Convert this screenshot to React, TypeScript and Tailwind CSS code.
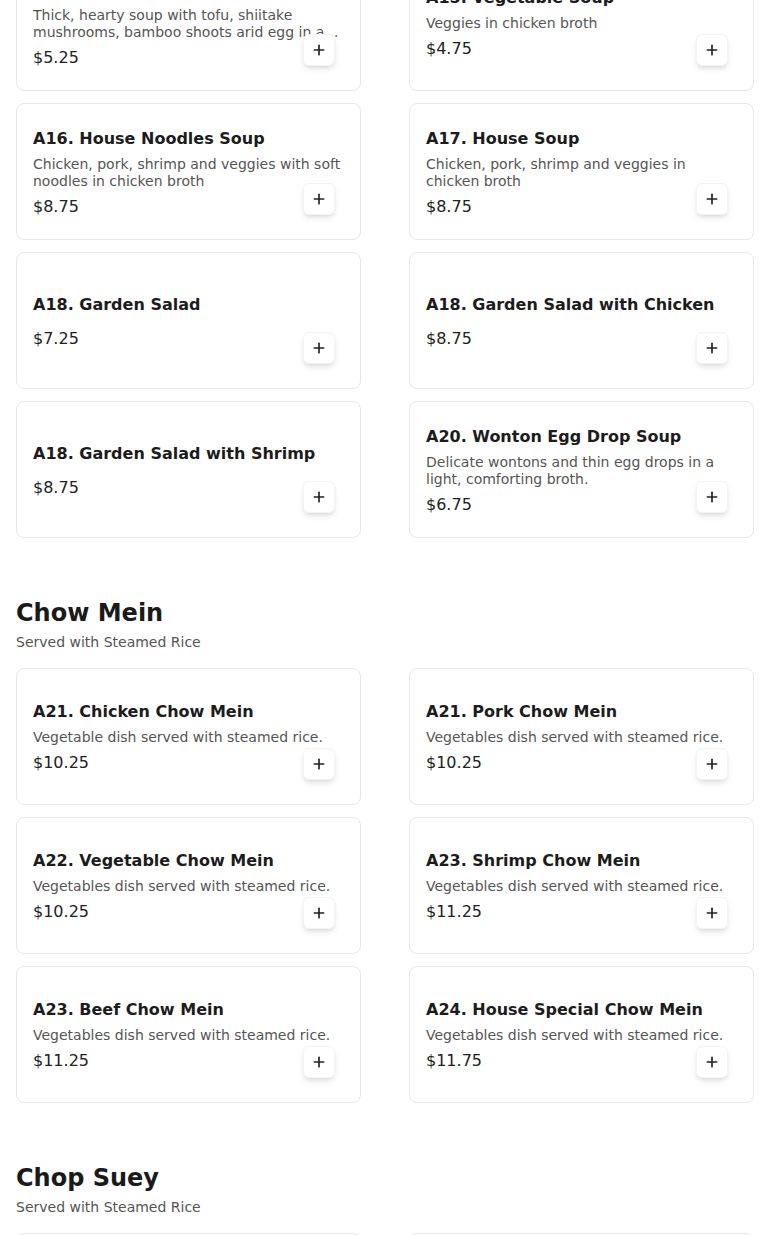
import { Plus } from "lucide-react";

type Item = { name: string; desc?: string; price: string };

// Letzte Karten der Suppen, danach die Abschnitte Chow Mein / Chop Suey.
const soups: Item[] = [
  {
    name: "A14. Hot and Sour Soup",
    desc: "Thick, hearty soup with tofu, shiitake mushrooms, bamboo shoots arid egg in a spicy and tangy broth",
    price: "$5.25",
  },
  { name: "A15. Vegetable Soup", desc: "Veggies in chicken broth", price: "$4.75" },
  {
    name: "A16. House Noodles Soup",
    desc: "Chicken, pork, shrimp and veggies with soft noodles in chicken broth",
    price: "$8.75",
  },
  {
    name: "A17. House Soup",
    desc: "Chicken, pork, shrimp and veggies in chicken broth",
    price: "$8.75",
  },
  { name: "A18. Garden Salad", price: "$7.25" },
  { name: "A18. Garden Salad with Chicken", price: "$8.75" },
  { name: "A18. Garden Salad with Shrimp", price: "$8.75" },
  {
    name: "A20. Wonton Egg Drop Soup",
    desc: "Delicate wontons and thin egg drops in a light, comforting broth.",
    price: "$6.75",
  },
];

const chowMein: Item[] = [
  { name: "A21. Chicken Chow Mein", desc: "Vegetable dish served with steamed rice.", price: "$10.25" },
  { name: "A21. Pork Chow Mein", desc: "Vegetables dish served with steamed rice.", price: "$10.25" },
  { name: "A22. Vegetable Chow Mein", desc: "Vegetables dish served with steamed rice.", price: "$10.25" },
  { name: "A23. Shrimp Chow Mein", desc: "Vegetables dish served with steamed rice.", price: "$11.25" },
  { name: "A23. Beef Chow Mein", desc: "Vegetables dish served with steamed rice.", price: "$11.25" },
  { name: "A24. House Special Chow Mein", desc: "Vegetables dish served with steamed rice.", price: "$11.75" },
];

const chopSuey: Item[] = [
  { name: "A25. Chicken Chop Suey", desc: "Vegetables dish served with steamed rice.", price: "$10.25" },
  { name: "A25. Pork Chop Suey", desc: "Vegetables dish served with steamed rice.", price: "$10.25" },
];

function MenuCard({ item }: { item: Item }) {
  return (
    <div className="relative flex h-[137px] items-center rounded-lg border border-gray-200 bg-white px-4">
      <div className="min-w-0 flex-1 pt-[2px]">
        <h3 className="text-base leading-6 font-bold text-[#1c1c1c]">{item.name}</h3>
        {item.desc && (
          <p className="mt-[5px] line-clamp-2 text-sm leading-[17px] text-[#555]">{item.desc}</p>
        )}
        <div className={`${item.desc ? "mt-[5px]" : "mt-[10px]"} text-base leading-6 text-[#222]`}>
          {item.price}
        </div>
      </div>
      {/* Plus-Knopf sitzt unten rechts über dem Inhalt */}
      <button
        type="button"
        aria-label={`${item.name} hinzufügen`}
        className="absolute right-[25px] bottom-6 flex h-8 w-8 items-center justify-center rounded-md border border-gray-100 bg-white text-[#222] shadow-md"
      >
        <Plus size={16} strokeWidth={2.5} />
      </button>
    </div>
  );
}

function Grid({ items }: { items: Item[] }) {
  return (
    <div className="grid grid-cols-2 gap-x-12 gap-y-3">
      {items.map((it, i) => (
        <MenuCard key={i} item={it} />
      ))}
    </div>
  );
}

function Section({ title, subtitle, items }: { title: string; subtitle: string; items: Item[] }) {
  return (
    <section className="mt-[59px]">
      <h2 className="text-2xl leading-8 font-bold text-[#1a1a1a]">{title}</h2>
      <p className="mt-[3px] text-sm leading-5 text-[#555]">{subtitle}</p>
      <div className="mt-[16px]">
        <Grid items={items} />
      </div>
    </section>
  );
}

export default function App() {
  return (
    <div
      className="min-h-screen overflow-hidden bg-white px-4"
      style={{ fontFamily: '"DejaVu Sans", "Liberation Sans", sans-serif' }}
    >
      <div className="-mt-[46px]">
        <Grid items={soups} />
        <Section title="Chow Mein" subtitle="Served with Steamed Rice" items={chowMein} />
        <Section title="Chop Suey" subtitle="Served with Steamed Rice" items={chopSuey} />
      </div>
    </div>
  );
}
